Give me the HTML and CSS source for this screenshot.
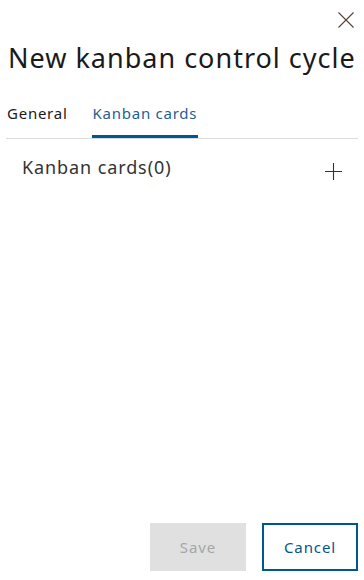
FILE: index.html
```html
<!DOCTYPE html>
<html>
<head>
<meta charset="utf-8">
<link rel="stylesheet" href="styles.css">
</head>
<body>
<div class="dialog">
  <div class="topbar">
    <button class="close" aria-label="Close">
      <svg width="16" height="16" viewBox="0 0 16 16"><path d="M0.5 0.5L15.5 15.5M15.5 0.5L0.5 15.5" stroke="#5a4036" stroke-width="1.1" fill="none"/></svg>
    </button>
  </div>
  <h1 class="title">New kanban control cycle</h1>
  <div class="tabs">
    <div class="tab">General</div>
    <div class="tab active">Kanban cards</div>
  </div>
  <div class="section">
    <div class="section-title">Kanban cards(0)</div>
    <button class="add" aria-label="Add">
      <svg width="17" height="17" viewBox="0 0 17 17"><path d="M8.5 0V17M0 8.5H17" stroke="#333" stroke-width="1.1" fill="none"/></svg>
    </button>
  </div>
  <div class="spacer"></div>
  <div class="footer">
    <button class="btn save" disabled>Save</button>
    <button class="btn cancel">Cancel</button>
  </div>
</div>
</body>
</html>
```
FILE: styles.css
```css
html, body { margin: 0; padding: 0; background: #fff; }
body { font-family: "Noto Sans", "Liberation Sans", sans-serif; color: #1a1a1a; }
.dialog { width: 364px; height: 580px; display: flex; flex-direction: column; box-sizing: border-box; padding: 0 6px 9px 6px; }
.topbar { display: flex; justify-content: flex-end; padding-top: 12px; padding-right: 4px; height: 16px; }
.close { background: none; border: none; padding: 0; margin: 0; width: 16px; height: 16px; display: block; cursor: pointer; }
.add { background: none; border: none; padding: 0; margin: 0; width: 17px; height: 17px; display: block; cursor: pointer; }
.close svg, .add svg { display: block; }
.title { margin: 12px 0 0 2px; font-size: 27px; font-weight: 400; line-height: 36px; color: #1a1a1a; letter-spacing: 1px; white-space: nowrap; }
.tabs { display: flex; gap: 23px; margin-top: 27px; border-bottom: 1px solid #dcdcdc; }
.tab { font-size: 15px; line-height: 20px; padding: 0 1px 12px 1px; border-bottom: 3px solid transparent; color: #1a1a1a; letter-spacing: 0.75px; }
.tab.active { color: #1f5f93; border-bottom-color: #005691; }
.section { display: flex; align-items: center; justify-content: space-between; padding: 15px 16px 0 16px; }
.section-title { font-size: 18px; line-height: 24px; color: #333; letter-spacing: 0.9px; }
.add { margin-top: 9px; }
.spacer { flex: 1; }
.footer { display: flex; justify-content: flex-end; gap: 16px; }
.btn { width: 96px; height: 48px; font-family: inherit; font-size: 15px; box-sizing: border-box; letter-spacing: 0.9px; }
.save { background: #e0e0e0; color: #a6a6a6; border: none; }
.cancel { background: #fff; color: #005691; border: 2px solid #005691; }
```
